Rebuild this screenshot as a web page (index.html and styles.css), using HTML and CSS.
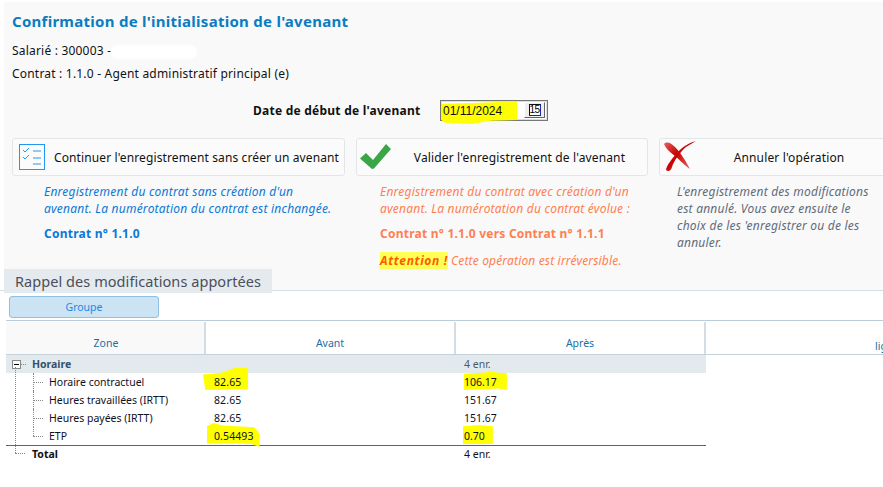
FILE: index.html
```html
<!DOCTYPE html>
<html lang="fr">
<head>
<meta charset="utf-8">
<title>Confirmation de l'initialisation de l'avenant</title>
<link rel="stylesheet" href="styles.css">
</head>
<body>
<main class="page">
  <section class="top">
    <h1 class="title">Confirmation de l'initialisation de l'avenant</h1>
    <p class="info">Salarié : 300003 -<span class="masked"></span></p>
    <p class="info">Contrat : 1.1.0 - Agent administratif principal (e)</p>
    <div class="date-row">
      <span class="date-label">Date de début de l'avenant</span>
      <span class="date-field">
        <span class="date-mark"></span>
        <span class="date-value">01/11/2024</span>
        <span class="cal-btn"><span class="cal-icon">15</span></span>
      </span>
    </div>
    <div class="options">
      <div class="option opt-a">
        <div class="card">
          <svg class="ic-list" width="26" height="26" viewBox="0 0 26 26"><rect x=".5" y=".5" width="25" height="25" fill="none" stroke="#2196f3"/><path d="M4 6l2 2 4-4M4 13l2 2 4-4" fill="none" stroke="#2196f3"/><path d="M14 7h8M14 14h8M14 20h8" fill="none" stroke="#2196f3"/></svg>
          <span class="card-label">Continuer l'enregistrement sans créer un avenant</span>
        </div>
        <div class="desc blue">
          <p class="em">Enregistrement du contrat sans création d'un<br>avenant. La numérotation du contrat est inchangée.</p>
          <p class="strong">Contrat n° 1.1.0</p>
        </div>
      </div>
      <div class="option opt-b">
        <div class="card">
          <svg class="ic-check" width="32" height="26" viewBox="0 0 32 26"><path d="M0 14.500L6 9 13 16 26 0 31 5 14 24.500 12 25z" fill="#3aa648"/></svg>
          <span class="card-label">Valider l'enregistrement de l'avenant</span>
        </div>
        <div class="desc orange">
          <p class="em">Enregistrement du contrat avec création d'un<br>avenant. La numérotation du contrat évolue :</p>
          <p class="strong">Contrat n° 1.1.0 vers Contrat n° 1.1.1</p>
          <p class="em warn"><b class="attn">Attention !</b> Cette opération est irréversible.</p>
        </div>
      </div>
      <div class="option opt-c">
        <div class="card">
          <svg class="ic-x" width="32" height="31" viewBox="0 0 32 31"><defs><linearGradient id="r" x1="0" y1="0" x2="1" y2="1"><stop offset="0" stop-color="#e8605e"/><stop offset=".45" stop-color="#c80000"/><stop offset="1" stop-color="#e06a6a"/></linearGradient></defs><path d="M0 3C3 0 7 2 11 6 15 10 22 20 26 28 20 24 15 18 11 15 6 11 2 8 0 3z" fill="url(#r)"/><path d="M32 0C24 2 17 7 12 13 7 19 3 24 2 29 4 31 7 30 8 26 10 20 16 11 22 6 25 4 29 2 32 0z" fill="url(#r)"/></svg>
          <span class="card-label">Annuler l'opération</span>
        </div>
        <div class="desc grey">
          <p class="em">L'enregistrement des modifications<br>est annulé. Vous avez ensuite le<br>choix de les 'enregistrer ou de les<br>annuler.</p>
        </div>
      </div>
    </div>
    <h2 class="tab">Rappel des modifications apportées</h2>
  </section>
  <section class="recap">
    <button class="group-btn" type="button">Groupe</button>
    <div class="grid">
      <div class="row head">
        <div class="hc hc-zone">Zone</div>
        <div class="hc">Avant</div>
        <div class="hc">Après</div>
        <div class="hc hc-last"><span>lig</span></div>
      </div>
      <div class="row group">
        <div class="c c-group"><span class="toggle"></span><b>Horaire</b></div>
        <div class="c"></div>
        <div class="c">4 enr.</div>
      </div>
      <div class="row item">
        <div class="c c-item">Horaire contractuel</div>
        <div class="c c-av"><span class="hl hl1">82.65</span></div>
        <div class="c"><span class="hl hl2">106.17</span></div>
      </div>
      <div class="row item">
        <div class="c c-item">Heures travaillées (IRTT)</div>
        <div class="c c-av">82.65</div>
        <div class="c">151.67</div>
      </div>
      <div class="row item">
        <div class="c c-item">Heures payées (IRTT)</div>
        <div class="c c-av">82.65</div>
        <div class="c">151.67</div>
      </div>
      <div class="row item last">
        <div class="c c-item">ETP</div>
        <div class="c c-av"><span class="hl hl3">0.54493</span></div>
        <div class="c"><span class="hl hl4">0.70</span></div>
      </div>
      <div class="row total">
        <div class="c c-total"><b>Total</b></div>
        <div class="c"></div>
        <div class="c">4 enr.</div>
      </div>
    </div>
  </section>
</main>
</body>
</html>
```
FILE: styles.css
```css
* { box-sizing: border-box; }
html, body { margin: 0; padding: 0; background: #fff; }
body { width: 883px; height: 487px; overflow: hidden; font-family: "Noto Sans", "Open Sans", sans-serif; font-size: 12px; color: #111; }
p, h1, h2 { margin: 0; }
.page { padding: 2px 0 0 4px; }
.top { display: flex; flex-direction: column; background: #f9f9f9; height: 288px; padding: 9px 0 0 8px; }
.title { font-size: 15px; font-weight: 700; line-height: 20px; color: #0a7dc2; letter-spacing: .27px; }
.info { line-height: 23px; font-size: 12px; letter-spacing: .2px; }
.title + .info { margin-top: 8px; }
.masked { display: inline-block; width: 86px; height: 14px; vertical-align: middle; background: #fff; border-radius: 7px; filter: blur(1px); }
.date-row { display: flex; align-items: center; margin-top: 15px; padding-left: 241px; height: 24px; }
.date-label { font-weight: 700; width: 187px; letter-spacing: .24px; }
.date-field { position: relative; display: flex; align-items: center; width: 108px; height: 21px; border: 1px solid #777; background: #fff; box-shadow: inset 0 0 0 1px #ddd; padding-left: 2px; }
.date-mark { position: absolute; left: 1px; top: 1px; width: 75px; height: 22px; background: #ff0; clip-path: polygon(0 8%, 40% 4%, 75% 0, 100% 0, 100% 82%, 65% 85%, 40% 100%, 5% 96%, 0 85%); }
.date-value { position: relative; font-family: "Liberation Sans", sans-serif; font-size: 12px; color: #111; }
.cal-btn { position: absolute; right: 2px; top: 1px; width: 21px; height: 16px; background: #eee; border: 1px solid; border-color: #fff #666 #666 #fff; display: flex; align-items: center; justify-content: center; }
.cal-icon { flex: none; width: 12px; height: 12px; border: 1px solid #111; border-right-color: #22a; border-bottom-color: #22a; background: #fff; font: 10px/10px "Liberation Sans", sans-serif; letter-spacing: -.5px; text-align: center; color: #000; overflow: hidden; }
.options { display: flex; margin-top: 17px; gap: 11px; }
.option { flex: none; }
.opt-a { width: 333px; }
.opt-b { width: 292px; }
.opt-c { width: 260px; }
.card { display: flex; align-items: center; height: 38px; border: 1px solid #e3e6e8; border-radius: 3px; background: #fbfbfb; position: relative; }
.card-label { flex: 1; text-align: center; font-size: 12px; color: #111; letter-spacing: .15px; white-space: nowrap; }
.ic-list { flex: none; margin-left: 6px; }
.opt-a .card-label { padding-left: 4px; letter-spacing: .12px; }
.ic-check { flex: none; margin-left: 3px; }
.ic-x { position: absolute; left: 4px; top: 2px; }
.desc { font-size: 12px; line-height: 17px; margin-top: 7px; letter-spacing: .22px; }
.em { font-style: italic; }
.strong { font-weight: 700; margin-top: 8px; letter-spacing: .23px; }
.warn { margin-top: 10px; letter-spacing: .16px; }
.attn { display: inline-block; line-height: 17px; background: #ffff55; color: #ff5a00; letter-spacing: .65px; }
.opt-a .desc { padding-left: 32px; }
.opt-b .desc { padding-left: 24px; }
.opt-c .desc { padding-left: 18px; }
.blue { color: #0a78d6; }
.orange { color: #ff7f50; }
.grey { color: #5f6b7a; }
.tab { align-self: flex-start; flex: none; margin: auto 0 0 -8px; width: 268px; height: 24px; background: #e5eaee; color: #4a4f5a; font-size: 14.5px; font-weight: 400; line-height: 24px; padding-left: 11px; letter-spacing: .06px; white-space: nowrap; }
.recap { border-top: 1px solid #d6dee4; padding: 5px 0 0 9px; margin-left: -4px; background: #fff; }
.group-btn { display: block; width: 150px; height: 22px; padding: 0; background: #cbe3f2; border: 1px solid #8fc0df; border-radius: 3px; font: 10.5px "Noto Sans", sans-serif; color: #1e88e5; }
.grid { margin: 2px 0 0 -3px; }
.row { display: grid; grid-template-columns: 200px 250px 250px 1fr; }
.head { height: 35px; border-top: 1px solid #bccdd9; border-bottom: 1px solid #c5d2db; background: #fff; }
.hc-zone { background: #f9f9f9; padding-left: 2px; }
.hc { display: flex; align-items: flex-end; justify-content: center; padding-bottom: 4px; font-size: 10.5px; color: #1c6ea4; border-right: 2px solid #d5dde3; margin-top: 1px; }
.hc-last { border-right: 0; justify-content: flex-end; padding-bottom: 1px; }
.hc-last span { width: 8px; overflow: hidden; }
.c { font-size: 10.5px; line-height: 18px; height: 18px; white-space: nowrap; color: #111; }
.group { width: 700px; grid-template-columns: 200px 250px 250px; background: #e3eaee; height: 18px; }
.group .c { color: #4a5a68; }
.group b { color: #35516b; }
.total { grid-template-columns: 200px 250px 250px; width: 700px; border-top: 1px solid #1a7ab0; }
.total .c { margin-top: -1px; }
.row .c:nth-child(3) { padding-left: 8px; }
.c-group { padding-left: 26px; position: relative; }
.c-total { padding-left: 26px; position: relative; }
.c-item { padding-left: 43px; position: relative; }
.c-av { padding-left: 8px; letter-spacing: .1px; }
.item .c { color: #10101e; }
.toggle { position: absolute; left: 6px; top: 5px; width: 9px; height: 9px; border: 1px solid #888; background: linear-gradient(#000,#000) center/5px 1px no-repeat #fff; }
.c-group::after { content: ""; position: absolute; left: 15px; top: 9px; width: 5px; border-top: 1px dotted #888; }
.c-item::before { content: ""; position: absolute; left: 27px; top: 0; height: 18px; border-left: 1px dotted #888; }
.last .c-item::before { height: 9px; }
.c-item::after { content: ""; position: absolute; left: 27px; top: 9px; width: 10px; border-top: 1px dotted #888; }
.c-total::before { content: ""; position: absolute; left: 9px; top: -78px; height: 86px; border-left: 1px dotted #888; }
.c-total::after { content: ""; position: absolute; left: 9px; top: 8px; width: 10px; border-top: 1px dotted #888; }
.hl { position: relative; display: inline-block; z-index: 0; }
.hl::before { content: ""; position: absolute; z-index: -1; background: #ff0; }
.hl1::before { left: -11px; right: -7px; top: -5px; bottom: 1px; clip-path: polygon(0 30%, 40% 22%, 70% 0, 100% 0, 100% 95%, 5% 100%); }
.hl2::before { left: 0; right: -10px; top: -2px; bottom: 1px; clip-path: polygon(0 14%, 50% 8%, 62% 0, 75% 8%, 100% 12%, 100% 100%, 80% 92%, 0 100%); }
.hl3::before { left: -7px; right: -6px; top: -4px; bottom: -2px; clip-path: polygon(0 12%, 12% 0, 30% 10%, 90% 18%, 100% 45%, 100% 100%, 85% 88%, 60% 85%, 0 85%); }
.hl4::before { left: -1px; right: -8px; top: -2px; bottom: 1px; clip-path: polygon(0 6%, 50% 0, 100% 6%, 100% 100%, 0 100%); }
```
